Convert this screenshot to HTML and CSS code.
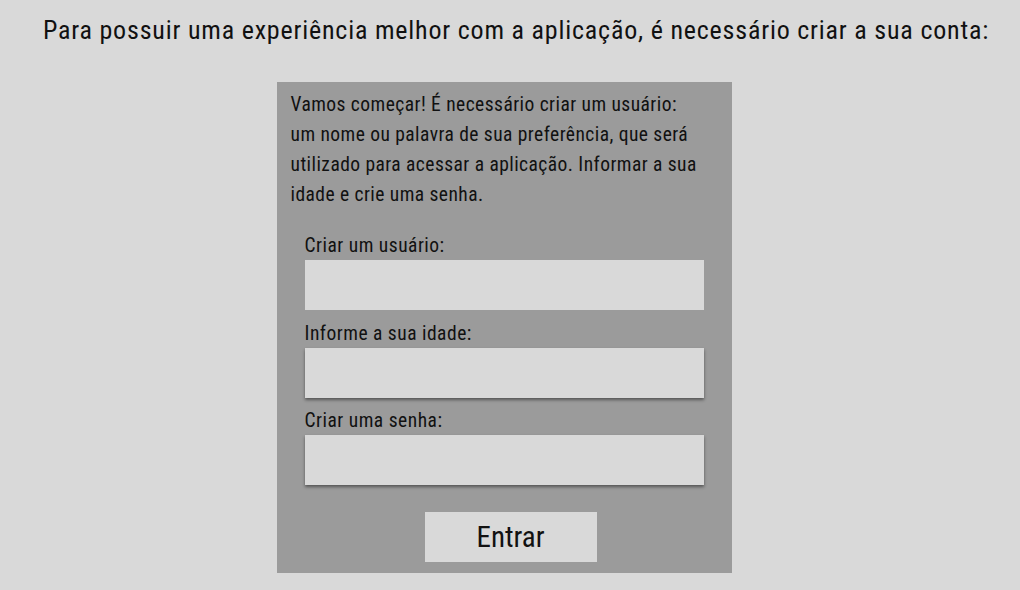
FILE: index.html
```html
<!DOCTYPE html>
<html lang="pt-BR">
<head>
<meta charset="utf-8">
<title>Criar conta</title>
<link rel="stylesheet" href="styles.css">
</head>
<body>
<main class="page">
  <h1 class="title">Para possuir uma experiência melhor com a aplicação, é necessário criar a sua conta:</h1>
  <form class="panel">
    <p class="intro">Vamos começar! É necessário criar um usuário:<br>um nome ou palavra de sua preferência, que será utilizado para acessar a aplicação. Informar a sua idade e crie uma senha.</p>
    <div class="fields">
      <label class="field">
        <span class="label">Criar um usuário:</span>
        <input class="input" type="text">
      </label>
      <label class="field">
        <span class="label">Informe a sua idade:</span>
        <input class="input input-shadow" type="text">
      </label>
      <label class="field field-last">
        <span class="label">Criar uma senha:</span>
        <input class="input input-shadow" type="password">
      </label>
    </div>
    <div class="actions">
      <button class="button" type="button">Entrar</button>
    </div>
  </form>
</main>
</body>
</html>
```
FILE: styles.css
```css
html, body {
  margin: 0;
  padding: 0;
  background: #d9d9d9;
  width: 1020px;
  height: 590px;
  overflow: hidden;
}
body {
  font-family: "Roboto Condensed", "Liberation Sans Narrow", "Liberation Sans", sans-serif;
  color: #111;
}
.page {
  display: flex;
  flex-direction: column;
  align-items: center;
}
.title {
  margin: 14px 0 0 12px;
  font-size: 26px;
  letter-spacing: 0.8px;
  font-weight: normal;
  line-height: 32px;
  white-space: nowrap;
}
.panel {
  margin: 36px 12px 0 0;
  width: 455px;
  height: 491px;
  box-sizing: border-box;
  background: #9b9b9b;
  padding: 8px 14px 0 14px;
  display: flex;
  flex-direction: column;
}
.intro {
  margin: 0;
  font-size: 19.5px;
  letter-spacing: 0.45px;
  line-height: 30px;
  width: 420px;
}
.fields {
  margin-top: 22px;
  padding-left: 14px;
  display: flex;
  flex-direction: column;
  gap: 10px;
}
.field {
  display: flex;
  flex-direction: column;
}
.field-last {
  margin-top: -1px;
}
.label {
  font-size: 19.5px;
  letter-spacing: 0.5px;
  line-height: 28px;
}
.input {
  width: 399px;
  height: 50px;
  box-sizing: border-box;
  border: none;
  background: #d9d9d9;
  margin: 0;
  padding: 0 10px;
  outline: none;
}
.input-shadow {
  box-shadow: 0 2px 3px rgba(0, 0, 0, 0.45);
}
.actions {
  margin-top: 27px;
  padding-left: 13px;
  display: flex;
  justify-content: center;
}
.button {
  width: 172px;
  height: 50px;
  border: none;
  background: #d9d9d9;
  font-family: inherit;
  font-size: 29px;
  color: #111;
  padding: 0;
}
```
